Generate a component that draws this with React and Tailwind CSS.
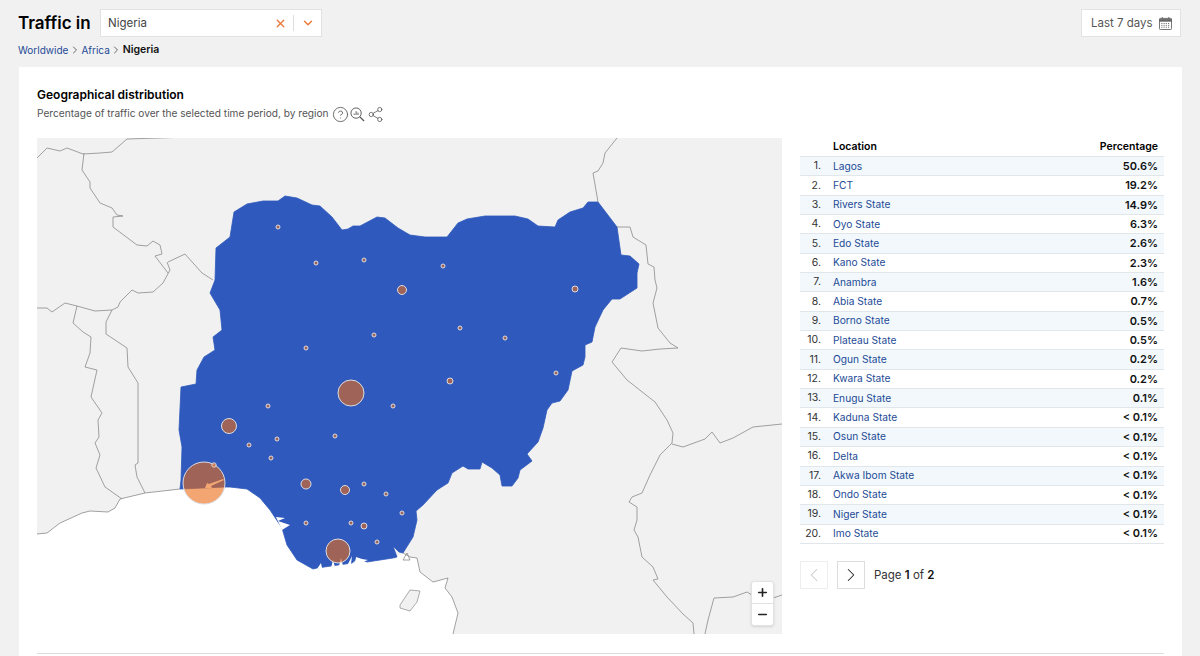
import { X, ChevronDown, ChevronLeft, ChevronRight, CircleHelp, Share2, Plus, Minus } from 'lucide-react';

const ROWS = [
  ['Lagos', '50.6%'],
  ['FCT', '19.2%'],
  ['Rivers State', '14.9%'],
  ['Oyo State', '6.3%'],
  ['Edo State', '2.6%'],
  ['Kano State', '2.3%'],
  ['Anambra', '1.6%'],
  ['Abia State', '0.7%'],
  ['Borno State', '0.5%'],
  ['Plateau State', '0.5%'],
  ['Ogun State', '0.2%'],
  ['Kwara State', '0.2%'],
  ['Enugu State', '0.1%'],
  ['Kaduna State', '< 0.1%'],
  ['Osun State', '< 0.1%'],
  ['Delta', '< 0.1%'],
  ['Akwa Ibom State', '< 0.1%'],
  ['Ondo State', '< 0.1%'],
  ['Niger State', '< 0.1%'],
  ['Imo State', '< 0.1%'],
];

const NIGERIA =
  '234,212 247,204 263,201 278,201 285,196 297,198 312,205 320,206 332,217 342,230 348,229 353,226 360,226 377,217 385,218 398,228 410,235 425,237 447,237 458,223 467,219 485,216 515,216 528,219 538,226 555,227 558,220 570,212 583,208 588,202 598,202 617,227 621,255 630,256 639,264 637,273 637,288 620,299 612,299 603,310 595,327 592,342 585,345 585,357 583,365 572,371 568,390 560,401 552,403 547,410 543,428 538,442 527,454 532,461 520,470 518,478 512,486 502,486 500,475 492,468 482,462 480,469 468,469 463,466 452,473 448,483 437,490 423,505 416,511 417,520 413,537 403,553 399,552 393,546 397,557 393,558 367,562 358,558 352,563 338,565 317,568 313,569 297,560 287,545 282,528 270,510 260,498 247,489 230,487 225,487 180,489 181,480 182,447 179,430 181,387 196,384 197,370 204,357 215,350 213,337 222,330 220,310 210,293 215,280 216,248 230,237';

const SEA =
  '37,534 47,533 60,523 82,513 90,511 108,512 115,508 120,499 145,493 180,489 225,487 247,489 260,498 270,510 282,528 287,545 297,560 313,569 393,558 403,553 410,557 417,558 420,572 433,582 448,578 445,588 452,597 458,613 453,635 37,635';

const BORDERS = [
  '37,158 47,148 60,151 67,148 83,154 100,153 112,152 127,139 190,137',
  '84,153 82,170 90,182 90,188 100,203 112,208 117,215 123,216 113,217 113,227 137,245 147,246 153,241 160,245 162,254 155,256 168,273',
  '168,262 185,254 202,273 213,280',
  '167,262 170,270 163,283 153,292 138,293 132,290 120,302 118,307 112,310 95,311 77,306 65,303 52,312 47,308 37,308',
  '77,306 73,323 83,332 91,337 90,353 85,367 97,370 93,388 91,397 102,413 98,420 99,437 95,443 100,455 96,468 105,487 122,499',
  '112,310 106,322 106,334 127,348 128,367 138,383 138,463 135,465 137,477 145,493',
  '37,534 47,533 60,523 82,513 90,511 108,512 115,508 120,499 145,493 180,489',
  '617,138 605,153 603,163 598,171 593,173 598,202',
  '617,227 630,227 633,237 646,245 648,264 654,267 655,280 657,288 653,303 658,328 670,343 678,348 660,349 642,351 621,348 612,362 627,380 655,402 667,420 673,433 672,443 660,455 650,475 642,493 632,497 629,502 637,507 637,520 634,530 638,537 642,557 653,567 658,579 653,580 667,597 683,614 693,623 694,634',
  '672,444 683,447 705,439 712,432 720,443 733,438 753,427 782,424',
  '705,634 708,620 714,598 733,597 747,592 752,595',
  '773,598 782,595',
  '403,553 410,557 417,558 420,572 433,582 448,578 445,588 452,597 458,613 453,634',
  '403,560 407,553 410,560 403,560',
];

const CREEKS = [
  '205,488 207,483 209,484 223,479 224,480 211,486 212,488',
  '276,517 285,518 278,521 290,525 282,530',
  '317,569 321,563 322,568',
  '331,568 333,560 335,567',
  '339,566 341,558 343,566',
  '347,566 352,556 351,564',
  '355,563 356,557 362,559 368,560 360,563',
];

const BUBBLES = [
  [204, 483, 21], [351, 393, 13], [338, 551, 12], [229, 426, 7.5], [306, 484, 5], [345, 490, 4.5], [402, 290, 4.5],
  [575, 289, 3], [450, 381, 3], [364, 526, 3], [214, 465, 2.2],
  [278, 227, 2], [316, 263, 2], [364, 260, 2], [443, 266, 2], [460, 328, 2], [505, 338, 2], [374, 335, 2],
  [306, 348, 2], [556, 373, 2], [393, 406, 2], [268, 406, 2], [335, 436, 2], [277, 439, 2], [249, 445, 2],
  [271, 458, 2], [364, 484, 2], [386, 494, 2], [402, 513, 2], [306, 523, 2], [351, 523, 2], [377, 542, 2],
];

function RegionMap() {
  return (
    <div className="relative w-[745px] h-[496px] bg-[#f1f1f1] shrink-0">
      <svg viewBox="37 138 745 496" className="block w-full h-full">
        <polygon points={SEA} fill="#ffffff" />
        <polygon points="400,605 410,590 420,591 417,602 410,611 400,608" fill="#f1f1f1" stroke="#8a8a8a" strokeWidth="0.7" />
        {BORDERS.map((pts) => (
          <polyline key={pts} points={pts} fill="none" stroke="#8a8a8a" strokeWidth="0.8" />
        ))}
        <polygon points={NIGERIA} fill="#2f59bc" stroke="#2f59bc" strokeWidth="0.8" strokeLinejoin="round" />
        {/* lagoons and creeks cut into the coast */}
        {CREEKS.map((pts) => (
          <polygon key={pts} points={pts} fill="#ffffff" />
        ))}
        {BUBBLES.map(([cx, cy, r]) => (
          <circle
            key={`${cx}-${cy}`}
            cx={cx}
            cy={cy}
            r={r}
            fill="#eb6a14"
            fillOpacity="0.6"
            stroke="#dcdce2"
            strokeWidth="1"
          />
        ))}
      </svg>
      <div className="absolute right-[8px] bottom-[8px] w-[23px] h-[45px] bg-white rounded-[3px] border border-[#e2e2e2] shadow-sm flex flex-col">
        <button className="flex-1 flex items-center justify-center border-b border-[#e2e2e2] text-[#222]">
          <Plus size={13} strokeWidth={3} />
        </button>
        <button className="flex-1 flex items-center justify-center text-[#222]">
          <Minus size={13} strokeWidth={3} />
        </button>
      </div>
    </div>
  );
}

function ZoomChartIcon() {
  return (
    <svg viewBox="0 0 16 16" className="w-[15px] h-[15px]" fill="none" stroke="#555" strokeWidth="1">
      <circle cx="6.5" cy="6.5" r="5.5" />
      <path d="M10.5 10.5 L15 15" strokeWidth="1.4" />
      <path d="M4.5 8.5V7 M6.5 8.5V4.5 M8.5 8.5V6" />
    </svg>
  );
}

function CalendarIcon() {
  return (
    <svg viewBox="0 0 14 14" className="w-[13px] h-[13px]" fill="none" stroke="#666" strokeWidth="1">
      <rect x="0.5" y="1.5" width="13" height="12" rx="1" />
      <path d="M0.5 2.5h13v2h-13z" fill="#666" />
      <path d="M3.5 0v2 M10.5 0v2" />
      <path d="M2.5 7h9 M2.5 9h9 M2.5 11h9" strokeDasharray="1.2 1.2" />
    </svg>
  );
}

function Chevron() {
  return <ChevronRight size={12} className="text-[#666] mx-[0.5px]" />;
}

export default function App() {
  return (
    <div className="h-[656px] overflow-hidden bg-[#f1f1f1] font-['Inter',sans-serif] text-[#111]">
      {/* Header */}
      <div className="flex items-center justify-between pl-[18px] pr-[19px] pt-[9px]">
        <div className="flex items-center gap-[10px]">
          <h1 className="text-[17px] leading-[28px] font-semibold text-black w-[72px] whitespace-nowrap">Traffic in</h1>
          <div className="w-[222px] h-[28px] bg-white border border-[#e2e2e2] flex items-center pl-[7px] text-[11.5px] text-[#444]">
            <span className="flex-1 pt-[2px]">Nigeria</span>
            <X size={13} strokeWidth={2.5} className="text-[#e8793a]" />
            <span className="w-px h-[16px] bg-[#dddddd] ml-[6px] mr-[7px]" />
            <ChevronDown size={14} strokeWidth={2.5} className="text-[#e8793a] mr-[6px]" />
          </div>
        </div>
        <div className="w-[100px] h-[28px] bg-white border border-[#e2e2e2] flex items-center justify-between pl-[9px] pr-[8px] text-[11.5px] text-[#555]">
          <span className="pt-[2px]">Last 7 days</span>
          <CalendarIcon />
        </div>
      </div>

      {/* Breadcrumb */}
      <div className="flex items-center pl-[18px] mt-[6px] h-[14px] text-[10px] text-[#1d4a96]">
        <span>Worldwide</span>
        <Chevron />
        <span>Africa</span>
        <Chevron />
        <span className="text-[10.5px] font-semibold text-[#111]">Nigeria</span>
      </div>

      {/* Card */}
      <div className="ml-[19px] mr-[18px] mt-[10px] bg-white pl-[18px] pr-[18px] pt-[19px] h-[600px]">
        <h2 className="text-[12px] leading-[17px] font-semibold text-black">Geographical distribution</h2>
        <div className="flex items-center mt-[2px] h-[18px] text-[10.15px] text-[#555]">
          <span>Percentage of traffic over the selected time period, by region</span>
          <CircleHelp size={17} strokeWidth={1.2} className="ml-[3px] text-[#555]" />
          <span className="ml-[1px]"><ZoomChartIcon /></span>
          <Share2 size={17} strokeWidth={1.1} className="ml-[2px] text-[#555]" />
        </div>

        <div className="flex gap-[18px] mt-[15px]">
          <RegionMap />

          <div className="w-[364px]">
            <div className="flex items-start h-[18px] text-[10.5px] leading-[18px] font-semibold text-black">
              <span className="ml-[33px] flex-1">Location</span>
              <span className="mr-[6px]">Percentage</span>
            </div>
            <div className="border-t border-[#e0e6ea]">
              {ROWS.map(([name, pct], i) => (
                <div
                  key={name}
                  className={`flex items-center h-[19.35px] border-b border-[#e0e6ea] text-[10.2px] ${i % 2 === 0 ? 'bg-[#f2f8fc]' : 'bg-white'}`}
                >
                  <span className="w-[21px] text-right text-[10.5px] text-[#333]">{i + 1}.</span>
                  <span className="ml-[12px] flex-1 text-[#1d4a96]">{name}</span>
                  <span className="mr-[6px] text-[11px] font-semibold text-[#111]">{pct}</span>
                </div>
              ))}
            </div>

            {/* Pagination */}
            <div className="flex items-center mt-[17px]">
              <button className="w-[28px] h-[28px] border border-[#eeeeee] flex items-center justify-center text-[#c8c8c8]">
                <ChevronLeft size={22} strokeWidth={1.1} />
              </button>
              <button className="ml-[9px] w-[28px] h-[28px] border border-[#dddddd] flex items-center justify-center text-[#222]">
                <ChevronRight size={22} strokeWidth={1.1} />
              </button>
              <span className="ml-[9px] pt-[1px] text-[11.5px] text-[#333]">
                Page <b className="font-semibold text-[#111]">1</b> of <b className="font-semibold text-[#111]">2</b>
              </span>
            </div>
          </div>
        </div>

        <div className="mt-[19px] border-t border-[#dddddd]" />
      </div>
    </div>
  );
}
